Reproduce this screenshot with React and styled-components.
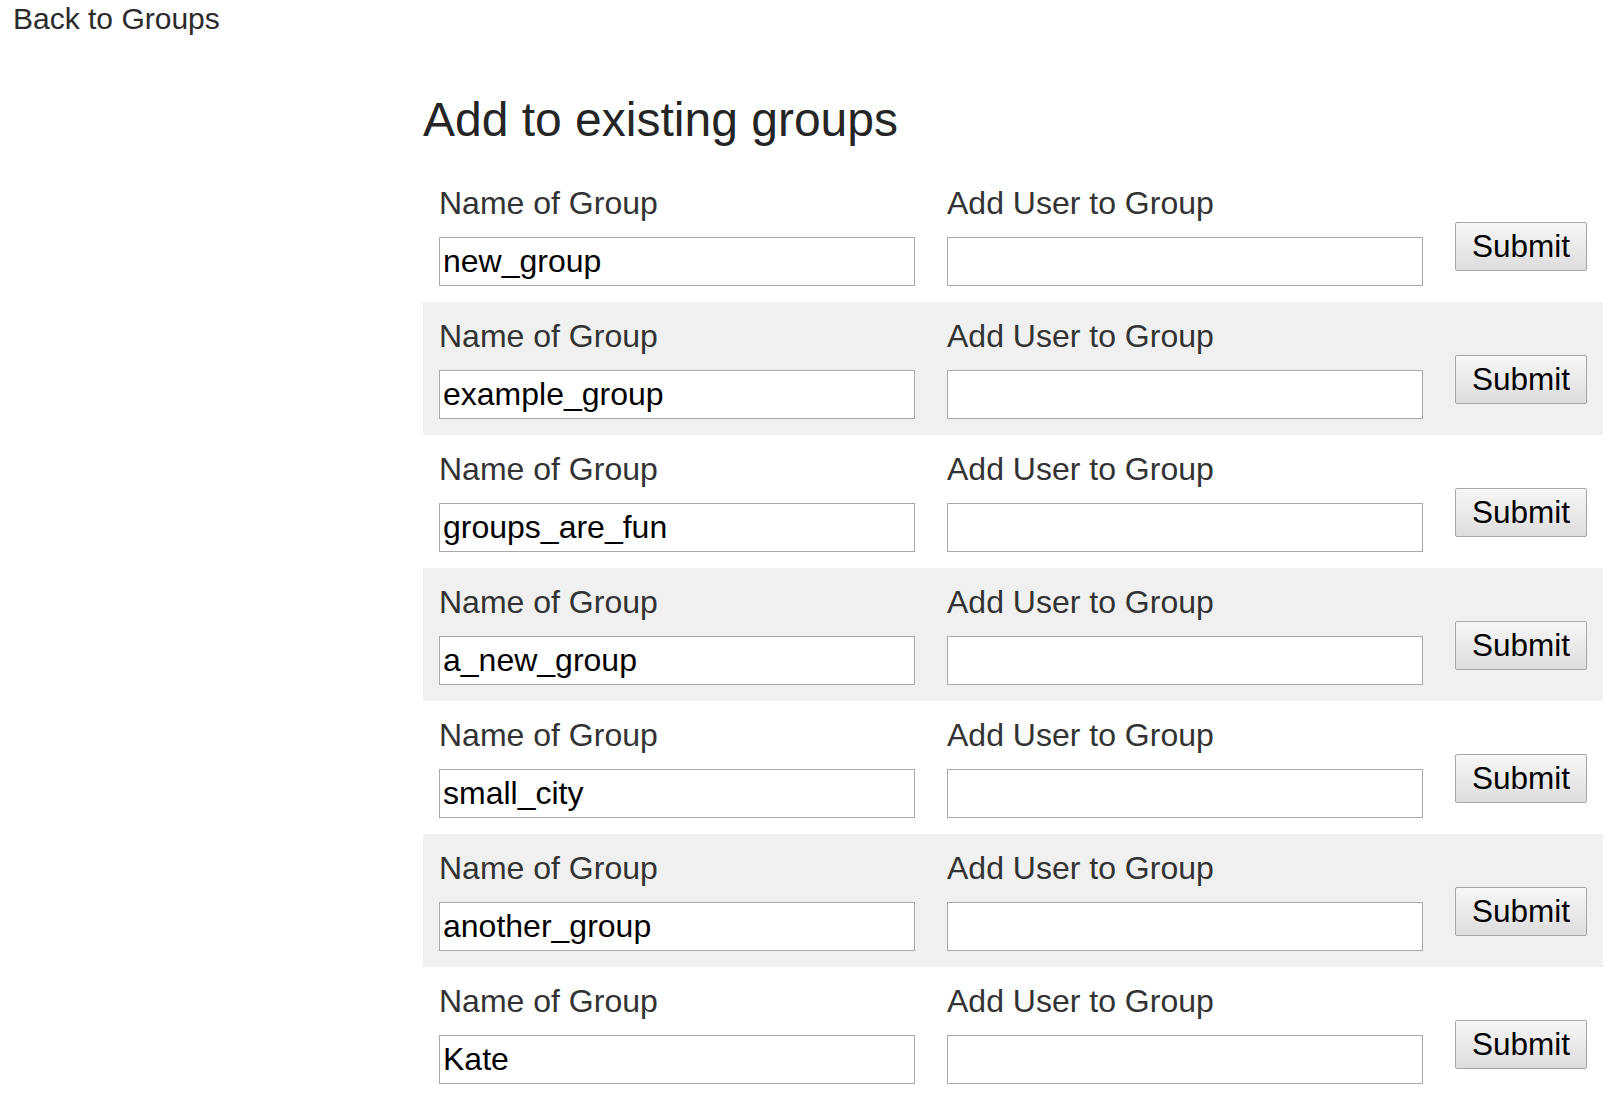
import React from "react";
import styled, { createGlobalStyle } from "styled-components";

const GlobalStyle = createGlobalStyle`
  body {
    margin: 0;
    background: #fff;
    font-family: "Liberation Sans", Arial, sans-serif;
    color: #333;
  }
`;

const BackLink = styled.a`
  display: block;
  padding: 2px 0 0 13px;
  font-size: 30px;
  line-height: 34px;
  color: #2b2b2b;
  text-decoration: none;
`;

const Section = styled.div`
  margin: 56px 0 0 423px;
  width: 1180px;
`;

const Title = styled.h1`
  margin: 0 0 22px;
  font-size: 48px;
  font-weight: normal;
  line-height: 55px;
  color: #252525;
`;

const GroupRow = styled.form`
  display: grid;
  grid-template-columns: 476px 476px 132px;
  column-gap: 32px;
  padding: 16px 16px 16px;
  height: 133px;
  box-sizing: border-box;
  background: ${(p) => (p.$shaded ? "#f0f0f0" : "transparent")};
  margin: 0;
`;

const Field = styled.label`
  display: flex;
  flex-direction: column;
`;

const FieldLabel = styled.span`
  font-size: 32px;
  line-height: 37px;
  margin-bottom: 15px;
  color: #333;
`;

const TextInput = styled.input`
  box-sizing: border-box;
  width: 476px;
  height: 49px;
  margin: 0;
  padding: 0 3px;
  border: 1px solid #a9a9a9;
  background: #fff;
  font-family: "Liberation Sans", Arial, sans-serif;
  font-size: 32px;
  color: #000;
  outline: none;
`;

const SubmitButton = styled.button`
  align-self: start;
  margin-top: 37px;
  box-sizing: border-box;
  width: 132px;
  height: 49px;
  padding: 0;
  border: 1px solid #a6a6a6;
  border-radius: 2px;
  background: linear-gradient(#f7f7f7, #dddddd);
  font-family: "Liberation Sans", Arial, sans-serif;
  font-size: 31.5px;
  color: #000;
`;

const groups = [
  "new_group",
  "example_group",
  "groups_are_fun",
  "a_new_group",
  "small_city",
  "another_group",
  "Kate",
];

const App = () => {
  return (
    <>
      <GlobalStyle />
      <BackLink href="#">Back to Groups</BackLink>
      <Section>
        <Title>Add to existing groups</Title>
        {groups.map((name, i) => (
          <GroupRow key={name} $shaded={i % 2 === 1} onSubmit={(e) => e.preventDefault()}>
            <Field>
              <FieldLabel>Name of Group</FieldLabel>
              <TextInput type="text" defaultValue={name} />
            </Field>
            <Field>
              <FieldLabel>Add User to Group</FieldLabel>
              <TextInput type="text" />
            </Field>
            <SubmitButton type="submit">Submit</SubmitButton>
          </GroupRow>
        ))}
      </Section>
    </>
  );
};

export default App;
